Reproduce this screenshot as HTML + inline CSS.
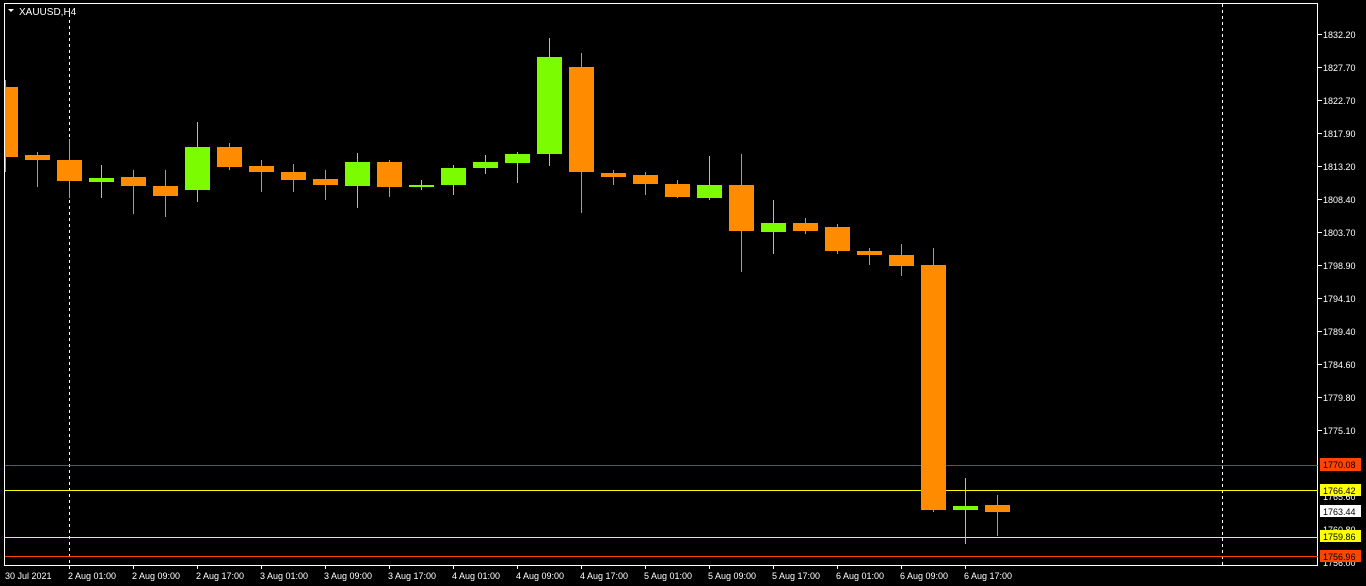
<!DOCTYPE html>
<html><head><meta charset="utf-8"><style>
html,body{margin:0;padding:0;background:#000;width:1366px;height:586px;overflow:hidden}
svg{display:block}
text{font-family:"Liberation Sans",sans-serif;font-size:9px;fill:#fff}
</style></head><body>
<svg width="1366" height="586" xmlns="http://www.w3.org/2000/svg">
<rect x="0" y="0" width="1366" height="586" fill="#000"/>
<rect x="4.5" y="3.5" width="1313" height="562" fill="none" stroke="#fff" stroke-width="1"/>
<line x1="69.5" y1="14" x2="69.5" y2="565" stroke="#fff" stroke-dasharray="3,3"/>
<line x1="1222.5" y1="4" x2="1222.5" y2="565" stroke="#fff" stroke-dasharray="3,3"/>
<polygon points="8,9 14,9 11,12" fill="#fff"/>
<text x="19" y="15" style="font-size:10px">XAUUSD,H4</text>
<g id="c"></g>
<line x1="5" y1="465.5" x2="1318" y2="465.5" stroke="#ff4500" stroke-width="1" opacity="0.75"/>
<line x1="5" y1="490.5" x2="1318" y2="490.5" stroke="#ffff00"/>
<line x1="5" y1="537.5" x2="1318" y2="537.5" stroke="#ffff00"/>
<line x1="5" y1="556.5" x2="1318" y2="556.5" stroke="#ff4500"/>
<g stroke-width="1">
<!-- candles: center, top body, bottom body, high, low, color -->
<line x1="5.5" y1="80" x2="5.5" y2="172" stroke="#ff8c00"/><rect x="5" y="87" width="13" height="70" fill="#ff8c00"/>
<line x1="37.5" y1="152" x2="37.5" y2="187" stroke="#ff8c00"/><rect x="25" y="155" width="25" height="5" fill="#ff8c00"/>
<line x1="69.5" y1="139" x2="69.5" y2="198" stroke="#ff8c00"/><rect x="57" y="160" width="25" height="21" fill="#ff8c00"/>
<line x1="101.5" y1="165" x2="101.5" y2="198" stroke="#7cfc00"/><rect x="89" y="178" width="25" height="4" fill="#7cfc00"/>
<line x1="133.5" y1="170" x2="133.5" y2="214" stroke="#ff8c00"/><rect x="121" y="177" width="25" height="9" fill="#ff8c00"/>
<line x1="165.5" y1="170" x2="165.5" y2="217" stroke="#ff8c00"/><rect x="153" y="186" width="25" height="10" fill="#ff8c00"/>
<line x1="197.5" y1="122" x2="197.5" y2="202" stroke="#7cfc00"/><rect x="185" y="147" width="25" height="43" fill="#7cfc00"/>
<line x1="229.5" y1="143" x2="229.5" y2="170" stroke="#ff8c00"/><rect x="217" y="147" width="25" height="20" fill="#ff8c00"/>
<line x1="261.5" y1="160" x2="261.5" y2="192" stroke="#ff8c00"/><rect x="249" y="166" width="25" height="6" fill="#ff8c00"/>
<line x1="293.5" y1="164" x2="293.5" y2="192" stroke="#ff8c00"/><rect x="281" y="172" width="25" height="8" fill="#ff8c00"/>
<line x1="325.5" y1="170" x2="325.5" y2="200" stroke="#ff8c00"/><rect x="313" y="179" width="25" height="6" fill="#ff8c00"/>
<line x1="357.5" y1="153" x2="357.5" y2="208" stroke="#7cfc00"/><rect x="345" y="162" width="25" height="24" fill="#7cfc00"/>
<line x1="389.5" y1="160" x2="389.5" y2="197" stroke="#ff8c00"/><rect x="377" y="162" width="25" height="25" fill="#ff8c00"/>
<line x1="421.5" y1="180" x2="421.5" y2="190" stroke="#7cfc00"/><rect x="409" y="185" width="25" height="2" fill="#7cfc00"/>
<line x1="453.5" y1="165" x2="453.5" y2="195" stroke="#7cfc00"/><rect x="441" y="168" width="25" height="17" fill="#7cfc00"/>
<line x1="485.5" y1="155" x2="485.5" y2="174" stroke="#7cfc00"/><rect x="473" y="162" width="25" height="6" fill="#7cfc00"/>
<line x1="517.5" y1="152" x2="517.5" y2="183" stroke="#7cfc00"/><rect x="505" y="154" width="25" height="9" fill="#7cfc00"/>
<line x1="549.5" y1="38" x2="549.5" y2="166" stroke="#7cfc00"/><rect x="537" y="57" width="25" height="97" fill="#7cfc00"/>
<line x1="581.5" y1="53" x2="581.5" y2="213" stroke="#ff8c00"/><rect x="569" y="67" width="25" height="105" fill="#ff8c00"/>
<line x1="613.5" y1="170" x2="613.5" y2="185" stroke="#ff8c00"/><rect x="601" y="173" width="25" height="4" fill="#ff8c00"/>
<line x1="645.5" y1="172" x2="645.5" y2="195" stroke="#ff8c00"/><rect x="633" y="175" width="25" height="9" fill="#ff8c00"/>
<line x1="677.5" y1="180" x2="677.5" y2="198" stroke="#ff8c00"/><rect x="665" y="184" width="25" height="13" fill="#ff8c00"/>
<line x1="709.5" y1="156" x2="709.5" y2="200" stroke="#7cfc00"/><rect x="697" y="185" width="25" height="13" fill="#7cfc00"/>
<line x1="741.5" y1="154" x2="741.5" y2="272" stroke="#ff8c00"/><rect x="729" y="185" width="25" height="46" fill="#ff8c00"/>
<line x1="773.5" y1="200" x2="773.5" y2="254" stroke="#7cfc00"/><rect x="761" y="223" width="25" height="9" fill="#7cfc00"/>
<line x1="805.5" y1="218" x2="805.5" y2="234" stroke="#ff8c00"/><rect x="793" y="223" width="25" height="8" fill="#ff8c00"/>
<line x1="837.5" y1="224" x2="837.5" y2="254" stroke="#ff8c00"/><rect x="825" y="227" width="25" height="24" fill="#ff8c00"/>
<line x1="869.5" y1="248" x2="869.5" y2="265" stroke="#ff8c00"/><rect x="857" y="251" width="25" height="4" fill="#ff8c00"/>
<line x1="901.5" y1="244" x2="901.5" y2="276" stroke="#ff8c00"/><rect x="889" y="255" width="25" height="11" fill="#ff8c00"/>
<line x1="933.5" y1="248" x2="933.5" y2="512" stroke="#ff8c00"/><rect x="921" y="265" width="25" height="245" fill="#ff8c00"/>
<line x1="965.5" y1="478" x2="965.5" y2="544" stroke="#7cfc00"/><rect x="953" y="506" width="25" height="4" fill="#7cfc00"/>
<line x1="997.5" y1="495" x2="997.5" y2="536" stroke="#ff8c00"/><rect x="985" y="505" width="25" height="7" fill="#ff8c00"/>
</g>
<!-- price axis -->
<g>
<line x1="1318" y1="34.5" x2="1322" y2="34.5" stroke="#fff"/><text x="1323" y="38">1832.20</text>
<line x1="1318" y1="67.5" x2="1322" y2="67.5" stroke="#fff"/><text x="1323" y="71">1827.70</text>
<line x1="1318" y1="100.5" x2="1322" y2="100.5" stroke="#fff"/><text x="1323" y="104">1822.70</text>
<line x1="1318" y1="133.5" x2="1322" y2="133.5" stroke="#fff"/><text x="1323" y="137">1817.90</text>
<line x1="1318" y1="166.5" x2="1322" y2="166.5" stroke="#fff"/><text x="1323" y="170">1813.20</text>
<line x1="1318" y1="199.5" x2="1322" y2="199.5" stroke="#fff"/><text x="1323" y="203">1808.40</text>
<line x1="1318" y1="232.5" x2="1322" y2="232.5" stroke="#fff"/><text x="1323" y="236">1803.70</text>
<line x1="1318" y1="265.5" x2="1322" y2="265.5" stroke="#fff"/><text x="1323" y="269">1798.90</text>
<line x1="1318" y1="298.5" x2="1322" y2="298.5" stroke="#fff"/><text x="1323" y="302">1794.10</text>
<line x1="1318" y1="331.5" x2="1322" y2="331.5" stroke="#fff"/><text x="1323" y="335">1789.40</text>
<line x1="1318" y1="364.5" x2="1322" y2="364.5" stroke="#fff"/><text x="1323" y="368">1784.60</text>
<line x1="1318" y1="397.5" x2="1322" y2="397.5" stroke="#fff"/><text x="1323" y="401">1779.80</text>
<line x1="1318" y1="430.5" x2="1322" y2="430.5" stroke="#fff"/><text x="1323" y="434">1775.10</text>
<text x="1323" y="500">1765.60</text>
<text x="1323" y="533">1760.80</text>
<text x="1323" y="566">1756.00</text>
<rect x="1320" y="458" width="41" height="13" fill="#ff4500"/><text x="1323" y="468" style="fill:#000">1770.08</text>
<rect x="1320" y="484" width="41" height="12" fill="#ffff00"/><text x="1323" y="494" style="fill:#000">1766.42</text>
<rect x="1320" y="505" width="41" height="12" fill="#fff"/><text x="1323" y="515" style="fill:#000">1763.44</text>
<rect x="1320" y="530" width="41" height="12" fill="#ffff00"/><text x="1323" y="540" style="fill:#000">1759.86</text>
<rect x="1320" y="550" width="41" height="12" fill="#ff4500"/><text x="1323" y="560" style="fill:#000">1756.96</text>
</g>
<!-- time axis -->
<g>
<text x="5" y="579">30 Jul 2021</text>
<line x1="69.5" y1="565" x2="69.5" y2="569" stroke="#fff"/><text x="68" y="579">2 Aug 01:00</text>
<line x1="133.5" y1="565" x2="133.5" y2="569" stroke="#fff"/><text x="132" y="579">2 Aug 09:00</text>
<line x1="197.5" y1="565" x2="197.5" y2="569" stroke="#fff"/><text x="196" y="579">2 Aug 17:00</text>
<line x1="261.5" y1="565" x2="261.5" y2="569" stroke="#fff"/><text x="260" y="579">3 Aug 01:00</text>
<line x1="325.5" y1="565" x2="325.5" y2="569" stroke="#fff"/><text x="324" y="579">3 Aug 09:00</text>
<line x1="389.5" y1="565" x2="389.5" y2="569" stroke="#fff"/><text x="388" y="579">3 Aug 17:00</text>
<line x1="453.5" y1="565" x2="453.5" y2="569" stroke="#fff"/><text x="452" y="579">4 Aug 01:00</text>
<line x1="517.5" y1="565" x2="517.5" y2="569" stroke="#fff"/><text x="516" y="579">4 Aug 09:00</text>
<line x1="581.5" y1="565" x2="581.5" y2="569" stroke="#fff"/><text x="580" y="579">4 Aug 17:00</text>
<line x1="645.5" y1="565" x2="645.5" y2="569" stroke="#fff"/><text x="644" y="579">5 Aug 01:00</text>
<line x1="709.5" y1="565" x2="709.5" y2="569" stroke="#fff"/><text x="708" y="579">5 Aug 09:00</text>
<line x1="773.5" y1="565" x2="773.5" y2="569" stroke="#fff"/><text x="772" y="579">5 Aug 17:00</text>
<line x1="837.5" y1="565" x2="837.5" y2="569" stroke="#fff"/><text x="836" y="579">6 Aug 01:00</text>
<line x1="901.5" y1="565" x2="901.5" y2="569" stroke="#fff"/><text x="900" y="579">6 Aug 09:00</text>
<line x1="965.5" y1="565" x2="965.5" y2="569" stroke="#fff"/><text x="964" y="579">6 Aug 17:00</text>
</g>
</svg>
</body></html>
